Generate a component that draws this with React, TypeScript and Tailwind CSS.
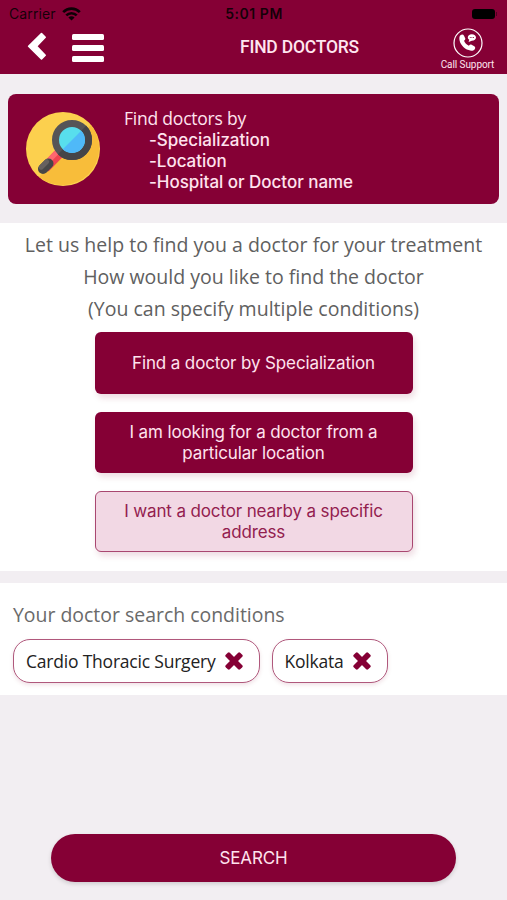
/**
 * Find Doctors screen
 * Lets a patient build up search conditions before running a doctor search
 */

import { useState } from 'react';
import { clsx } from 'clsx';

const SEARCH_OPTIONS = [
  { id: 'specialization', label: 'Find a doctor by Specialization', filled: true },
  { id: 'location', label: 'I am looking for a doctor from a particular location', filled: true },
  { id: 'nearby', label: 'I want a doctor nearby a specific address', filled: false },
];

function StatusBar() {
  return (
    <div className="flex h-[27px] items-center pl-[9px] pr-[10px] text-black/85">
      <div className="flex flex-1 items-center gap-[6px]">
        <span className="text-[14px] tracking-[0.1px]">Carrier</span>
        <svg className="h-[14px] w-[19px]" viewBox="0 0 19 14" fill="none" stroke="#0d0005" strokeWidth="2.7">
          <path d="M1.2 5.1a11.8 11.8 0 0 1 16.6 0" />
          <path d="M4.3 8.4a7.4 7.4 0 0 1 10.4 0" />
          <path d="M9.5 13.6 6.4 10.5a4.4 4.4 0 0 1 6.2 0Z" fill="#0d0005" stroke="none" />
        </svg>
      </div>
      <span className="pl-[2px] text-[14px] font-semibold tracking-[0.55px]">5:01 PM</span>
      <div className="flex flex-1 items-center justify-end gap-[1px]">
        <div className="h-[10px] w-[23px] rounded-[3px] bg-black" />
        <div className="h-[4px] w-[1px] bg-black/40" />
      </div>
    </div>
  );
}

function Header() {
  return (
    <header className="h-[74px] bg-[#850035]">
      <StatusBar />
      <div className="flex h-[47px]">
        <div className="flex w-[150px] gap-[25px] pl-[27px]">
          <button className="flex self-start pt-[5px]" aria-label="Back">
            <svg className="h-[29px] w-[20px]" viewBox="0 0 20 29" fill="white" stroke="white" strokeWidth="1.6" strokeLinejoin="round">
              <path d="M14.5 1.6 1.6 14.3l12.9 12.7 3.7-3.7-8.6-9L18.2 5.3Z" />
            </svg>
          </button>
          <button className="mt-[7px] flex h-[28px] flex-col justify-between" aria-label="Menu">
            <span className="h-[6px] w-[32px] rounded-[1.5px] bg-white" />
            <span className="h-[6px] w-[32px] rounded-[1.5px] bg-white" />
            <span className="h-[6px] w-[32px] rounded-[1.5px] bg-white" />
          </button>
        </div>
        <h1 className="flex-1 pt-[8px] pl-[90px] font-[Roboto] text-[17.5px] leading-[25px] font-medium tracking-[-0.22px] whitespace-nowrap text-[#ffe6f0]">
          FIND DOCTORS
        </h1>
        <button className="flex w-[79px] flex-col items-center pt-[1px] text-[#ffe3ee]">
          <svg className="h-[30px] w-[30px]" viewBox="0 0 30 30">
            <circle cx="15" cy="15" r="14" fill="none" stroke="white" strokeWidth="1.2" />
            <path
              d="M7.4 7.2c1.4-1 3-.8 3.6.5l1.2 2.6c.4 1-.1 1.8-1.2 2.5.9 2.2 2.6 4 4.9 5 .8-1.2 1.7-1.5 2.7-1l2.7 1.4c1.2.7 1.2 2.1.3 3.2-1.4 1.6-3.5 1.6-5.9.7-5-1.7-8.9-6.2-9.3-10.9-.1-1.6 0-3.2 1-4Z"
              fill="white"
            />
            <path d="M18.8 6.3c2.5 0 4.2 1.3 4.2 3.2s-1.7 3.2-4.2 3.2l-3.2 1.3.7-2.3c-1-.6-1.5-1.3-1.5-2.2 0-1.9 1.500-3.200 4-3.200Z" fill="white" />
            <path d="M16.8 9.5h4.2" stroke="#850035" strokeWidth="0.8" strokeDasharray="1 .6" />
          </svg>
          <span className="font-[Roboto] text-[10px] leading-[14px] tracking-[-0.08px] whitespace-nowrap">Call Support</span>
        </button>
      </div>
    </header>
  );
}

function MagnifierIcon() {
  return (
    <svg className="h-[74px] w-[74px]" viewBox="0 0 74 74">
      <circle cx="37" cy="37" r="37" fill="#fcd04e" />
      <path d="M65 13a37 37 0 0 1-52 52Z" fill="#f8bd3a" />
      <path d="M34.5 40 19 56" stroke="#f04450" strokeWidth="10" />
      <path d="M32.7 38.3 17.2 54.3" stroke="#ff6870" strokeWidth="5" />
      <path d="m22.500 51.500-5.500 5.500" stroke="#474747" strokeWidth="10" strokeLinecap="round" />
      <path d="m20.700 49.700-5.500 5.500" stroke="#66615f" strokeWidth="5" strokeLinecap="round" />
      <circle cx="46" cy="28" r="16.5" fill="#58deed" stroke="#565557" strokeWidth="7" />
      <path d="M57.7 16.3a16.5 16.5 0 0 1-23.4 23.4" fill="none" stroke="#454548" strokeWidth="7" />
      <path d="M55.2 18.8a13 13 0 0 1-18.4 18.4Z" fill="#4fb9f8" />
    </svg>
  );
}

function CrossIcon() {
  return (
    <svg className="h-[18px] w-[18px]" viewBox="0 0 18 18" fill="#850035">
      <rect x="-1.2" y="6.1" width="20.4" height="5.8" rx="1.4" transform="rotate(45 9 9)" />
      <rect x="-1.2" y="6.1" width="20.4" height="5.8" rx="1.4" transform="rotate(-45 9 9)" />
    </svg>
  );
}

export default function App() {
  const [conditions, setConditions] = useState(['Cardio Thoracic Surgery', 'Kolkata']);

  const removeCondition = (name: string) => {
    setConditions((prev) => prev.filter((c) => c !== name));
  };

  return (
    <div className="flex h-[900px] w-[507px] flex-col overflow-hidden bg-[#f2eef2] font-[Inter,sans-serif]">
      <Header />

      {/* Intro card */}
      <section className="mx-2 mt-5 flex h-[110px] rounded-[8px] bg-[#850035] pt-[14px] pl-[18px] text-[#ffe3ee]">
        <div className="pt-[4px]">
          <MagnifierIcon />
        </div>
        <div className="ml-[24px]">
          <p className="font-['Open_Sans'] text-[17.5px] leading-[21px] tracking-[-0.22px]">Find doctors by</p>
          <ul className="pt-[1.2px] pl-[25px] text-[17px] leading-[20.7px] font-medium tracking-[-0.03px]">
            <li>-Specialization</li>
            <li>-Location</li>
            <li>-Hospital or Doctor name</li>
          </ul>
        </div>
      </section>

      {/* Search options */}
      <section className="mt-[19px] flex h-[348px] flex-col items-center bg-white pt-[6px]">
        <div className="text-center font-['Open_Sans'] text-[19.53px] leading-[32px] whitespace-nowrap text-[#606060]">
          <p>Let us help to find you a doctor for your treatment</p>
          <p>How would you like to find the doctor</p>
          <p>(You can specify multiple conditions)</p>
        </div>
        <div className="mt-[7.4px] flex flex-col gap-[18px]">
          {SEARCH_OPTIONS.map((option) => (
            <button
              key={option.id}
              className={clsx(
                'flex h-[61.3px] w-[318px] items-center justify-center rounded-[6px] px-5 pt-[1px]',
                'text-[17px] leading-[21px] tracking-[-0.13px] shadow-[2px_4px_6px_rgba(133,0,53,0.14)]',
                option.filled
                  ? 'bg-[#850035] text-[#ffe3ee]'
                  : 'border border-[#a94770] bg-[#f2d8e4] text-[#93204f]'
              )}
            >
              {option.label}
            </button>
          ))}
        </div>
      </section>

      {/* Selected conditions */}
      <section className="mt-3 h-[112px] bg-white pt-[17px] pl-[13px] font-['Open_Sans']">
        <h2 className="text-[19.45px] leading-[30px] text-[#6a6a6a]">Your doctor search conditions</h2>
        <div className="mt-[9px] flex gap-[12px]">
          {conditions.map((name) => (
            <div
              key={name}
              className="flex h-[44px] items-center gap-[9px] rounded-[17px] border border-[#b0587c] bg-white pr-[16px] pl-[12px] text-[17.5px] tracking-[-0.21px] text-[#222] shadow-[0_2px_4px_rgba(133,0,53,0.12)]"
            >
              <span className="whitespace-nowrap">{name}</span>
              <button onClick={() => removeCondition(name)} aria-label={`Remove ${name}`}>
                <CrossIcon />
              </button>
            </div>
          ))}
        </div>
      </section>

      <button className="mx-auto mt-auto mb-[18px] h-[48px] w-[405px] rounded-full bg-[#850035] pt-[2px] text-[17px] tracking-[-0.1px] text-[#ffe3ee] shadow-[0_2px_4px_rgba(0,0,0,0.15)]">
        SEARCH
      </button>
    </div>
  );
}
